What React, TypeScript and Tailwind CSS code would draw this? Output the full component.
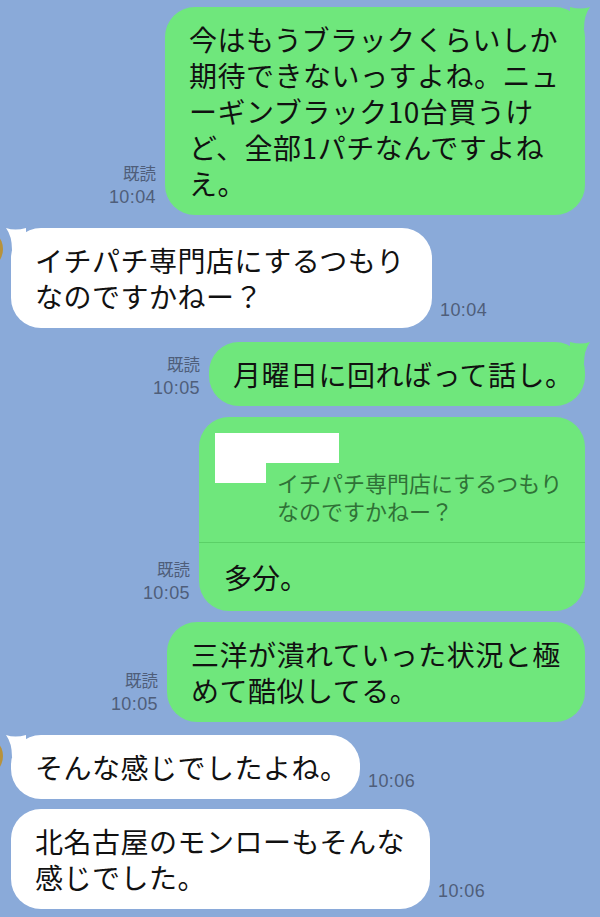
import type { ReactNode } from 'react'

const jp = 'font-["Noto_Sans_CJK_JP","Noto_Sans",sans-serif]'
const meta = 'font-["Liberation_Sans","Noto_Sans_CJK_JP",sans-serif] leading-[23px] text-[#4f5e7a]'

function RightTail() {
  return (
    <svg className="absolute right-[-6px] top-[-2px]" width="22" height="24" viewBox="0 0 22 24">
      <path d="M1 2 Q12 5 21 2 Q15 10 15 24 L1 24 Z" fill="#6fe77c" />
    </svg>
  )
}

function LeftTail() {
  return (
    <svg className="absolute left-[-6px] top-[-2px] -scale-x-100" width="22" height="24" viewBox="0 0 22 24">
      <path d="M1 2 Q12 5 21 2 Q15 10 15 24 L1 24 Z" fill="#ffffff" />
    </svg>
  )
}

// 自分の送信メッセージ (右側・緑)
function Sent({ time, width, tail, className = '', children }: { time: string; width: string; tail?: boolean; className?: string; children: ReactNode }) {
  return (
    <div className={`flex justify-end items-end pr-[15px] ${className}`}>
      <div className={`${meta} text-right mr-[9px] mb-[6px]`}>
        <div className="text-[16.5px]">既読</div>
        <div className="text-[18px] tracking-[0.4px]">{time}</div>
      </div>
      <div className={`relative ${width} shrink-0 bg-[#6fe77c] rounded-[30px]`}>
        {tail && <RightTail />}
        {children}
      </div>
    </div>
  )
}

// 相手のメッセージ (左側・白)
function Received({ time, width, tail, className = '', children }: { time: string; width: string; tail?: boolean; className?: string; children: ReactNode }) {
  return (
    <div className={`flex items-end ${className}`}>
      <div className="flex items-start shrink-0 self-stretch">
        <div className={`w-10 h-10 ml-[-37px] mt-[1px] rounded-full ${tail ? 'bg-[#b8923a]' : 'bg-transparent'}`} />
      </div>
      <div className={`relative ${width} shrink-0 ml-[8px] bg-white rounded-[30px]`}>
        {tail && <LeftTail />}
        {children}
      </div>
      <div className={`${meta} text-[18px] ml-[8px] mb-[6px] tracking-[0.4px]`}>{time}</div>
    </div>
  )
}

function Text({ children }: { children: ReactNode }) {
  return (
    <p className={`${jp} text-[28px] leading-[36px] tracking-[0.5px] text-[#111] pl-[24px] py-[14px] whitespace-nowrap`}>
      {children}
    </p>
  )
}

export default function App() {
  return (
    <div className="w-[600px] h-[917px] overflow-hidden bg-[#8aaad9] pt-[7px]">
      <Sent time="10:04" width="w-[420px]" tail>
        <Text>
          今はもうブラックくらいしか<br />
          期待できないっすよね。ニュ<br />
          ーギンブラック10台買うけ<br />
          ど、全部1パチなんですよね<br />
          え。
        </Text>
      </Sent>

      <Received time="10:04" width="w-[421px]" tail className="mt-[13px]">
        <Text>
          イチパチ専門店にするつもり<br />
          なのですかねー？
        </Text>
      </Received>

      <Sent time="10:05" width="w-[376px]" tail className="mt-[14px]">
        <Text>月曜日に回ればって話し。</Text>
      </Sent>

      {/* 返信 (引用付き) */}
      <Sent time="10:05" width="w-[386px]" className="mt-[11px]">
        <div className="flex pl-[16px] pt-[16px] pb-[18px] border-b border-[#5bd067]">
          <div className="w-[51px] h-[50px] bg-white shrink-0" />
          <div className="flex flex-col">
            <div className="w-[73px] h-[30px] bg-white" />
            <p className={`${jp} text-[22px] leading-[28px] text-[#2f7237] ml-[11px] mt-[5px] whitespace-nowrap`}>
              イチパチ専門店にするつもり<br />
              なのですかねー？
            </p>
          </div>
        </div>
        <div className={`${jp} text-[28px] leading-[36px] text-[#111] pl-[25px] py-[16px]`}>多分。</div>
      </Sent>

      <Sent time="10:05" width="w-[418px]" className="mt-[11px]">
        <Text>
          三洋が潰れていった状況と極<br />
          めて酷似してる。
        </Text>
      </Sent>

      <Received time="10:06" width="w-[349px]" tail className="mt-[13px]">
        <Text>そんな感じでしたよね。</Text>
      </Received>

      <Received time="10:06" width="w-[419px]" className="mt-[10px]">
        <Text>
          北名古屋のモンローもそんな<br />
          感じでした。
        </Text>
      </Received>
    </div>
  )
}
